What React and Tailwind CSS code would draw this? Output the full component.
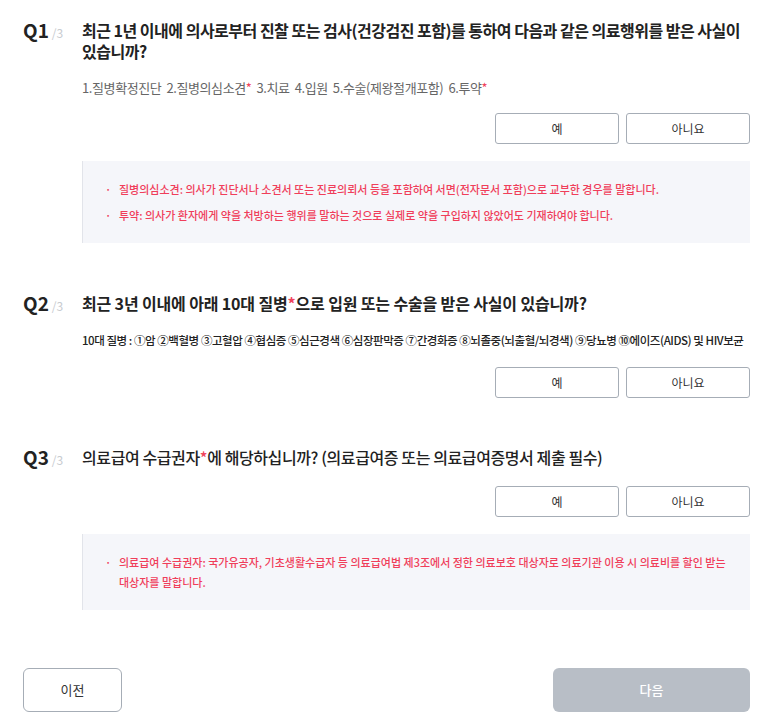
const Star = () => <span className="text-[#f0435b]">*</span>;

const AnswerButtons = () => (
  <div className="flex justify-end gap-[7px]">
    <button className="w-[124px] h-[31px] rounded-[3px] border border-[#a6adb6] bg-white text-[12px] text-[#333]">예</button>
    <button className="w-[124px] h-[31px] rounded-[3px] border border-[#a6adb6] bg-white text-[12px] text-[#333]">아니요</button>
  </div>
);

const Notice = ({ items }) => (
  <div className="bg-[#f5f6fa] border-l border-[#e2e4ea] pl-[22px] pr-[20px] py-[18px] flex flex-col gap-[6px]">
    {items.map((t, i) => (
      <div key={i} className="flex text-[11px] font-medium leading-[20px] text-[#f03e5a]">
        <span className="w-[14px] shrink-0">·</span>
        <span>{t}</span>
      </div>
    ))}
  </div>
);

const QLabel = ({ n }) => (
  <div className="w-[59px] shrink-0 flex items-baseline pt-[18px] leading-[24px]">
    <span className="text-[19px] font-bold text-[#222]">Q{n}</span>
    <span className="ml-[3px] text-[12px] text-[#c8cbd0]">/3</span>
  </div>
);

export default function App() {
  return (
    <div className="w-[778px] min-h-[724px] bg-white pl-[23px] pr-[28px] pb-[13px] font-['Noto_Sans_CJK_KR','Noto_Sans',sans-serif] text-[#222]">
      {/* Q1 */}
      <div className="flex">
        <QLabel n={1} />
        <div className="flex-1 min-w-0 pt-[20px]">
          <h2 className="text-[16px] font-bold leading-[21px] tracking-[-0.5px] break-keep text-[#222]">
            최근 1년 이내에 의사로부터 진찰 또는 검사(건강검진 포함)를 통하여 다음과 같은 의료행위를 받은 사실이 있습니까?
          </h2>
          <p className="mt-[16px] text-[13px] leading-[20px] tracking-[-0.4px] text-[#666] whitespace-pre">
            1.질병확정진단  2.질병의심소견<Star />  3.치료  4.입원  5.수술(제왕절개포함)  6.투약<Star />
          </p>
          <div className="mt-[15px]">
            <AnswerButtons />
          </div>
          <div className="mt-[17px]">
            <Notice
              items={[
                '질병의심소견: 의사가 진단서나 소견서 또는 진료의뢰서 등을 포함하여 서면(전자문서 포함)으로 교부한 경우를 말합니다.',
                '투약: 의사가 환자에게 약을 처방하는 행위를 말하는 것으로 실제로 약을 구입하지 않았어도 기재하여야 합니다.',
              ]}
            />
          </div>
        </div>
      </div>

      {/* Q2 */}
      <div className="flex mt-[30px]">
        <QLabel n={2} />
        <div className="flex-1 min-w-0 pt-[20px]">
          <h2 className="text-[16px] font-bold leading-[21px] tracking-[-0.15px] break-keep text-[#222]">
            최근 3년 이내에 아래 10대 질병<Star />으로 입원 또는 수술을 받은 사실이 있습니까?
          </h2>
          <p className="mt-[17px] text-[11.5px] font-medium leading-[18px] text-[#222] whitespace-nowrap tracking-[-0.45px]">
            10대 질병 : ①암 ②백혈병 ③고혈압 ④협심증 ⑤심근경색 ⑥심장판막증 ⑦간경화증 ⑧뇌졸중(뇌출혈/뇌경색) ⑨당뇨병 ⑩에이즈(AIDS) 및 HIV보균
          </p>
          <div className="mt-[18px]">
            <AnswerButtons />
          </div>
        </div>
      </div>

      {/* Q3 */}
      <div className="flex mt-[29px]">
        <QLabel n={3} />
        <div className="flex-1 min-w-0 pt-[20px]">
          <h2 className="text-[16px] font-medium leading-[21px] tracking-[-0.4px] break-keep text-[#222]">
            의료급여 수급권자<Star />에 해당하십니까? (의료급여증 또는 의료급여증명서 제출 필수)
          </h2>
          <div className="mt-[18px]">
            <AnswerButtons />
          </div>
          <div className="mt-[17px]">
            <Notice
              items={[
                '의료급여 수급권자: 국가유공자, 기초생활수급자 등 의료급여법 제3조에서 정한 의료보호 대상자로 의료기관 이용 시 의료비를 할인 받는 대상자를 말합니다.',
              ]}
            />
          </div>
        </div>
      </div>

      {/* Navigation */}
      <div className="flex justify-between mt-[58px]">
        <button className="w-[99px] h-[44px] rounded-[6px] border border-[#a6adb6] bg-white text-[13px] text-[#333]">이전</button>
        <button className="w-[197px] h-[44px] rounded-[6px] bg-[#b8bec6] text-[13px] font-medium text-white">다음</button>
      </div>
    </div>
  );
}
